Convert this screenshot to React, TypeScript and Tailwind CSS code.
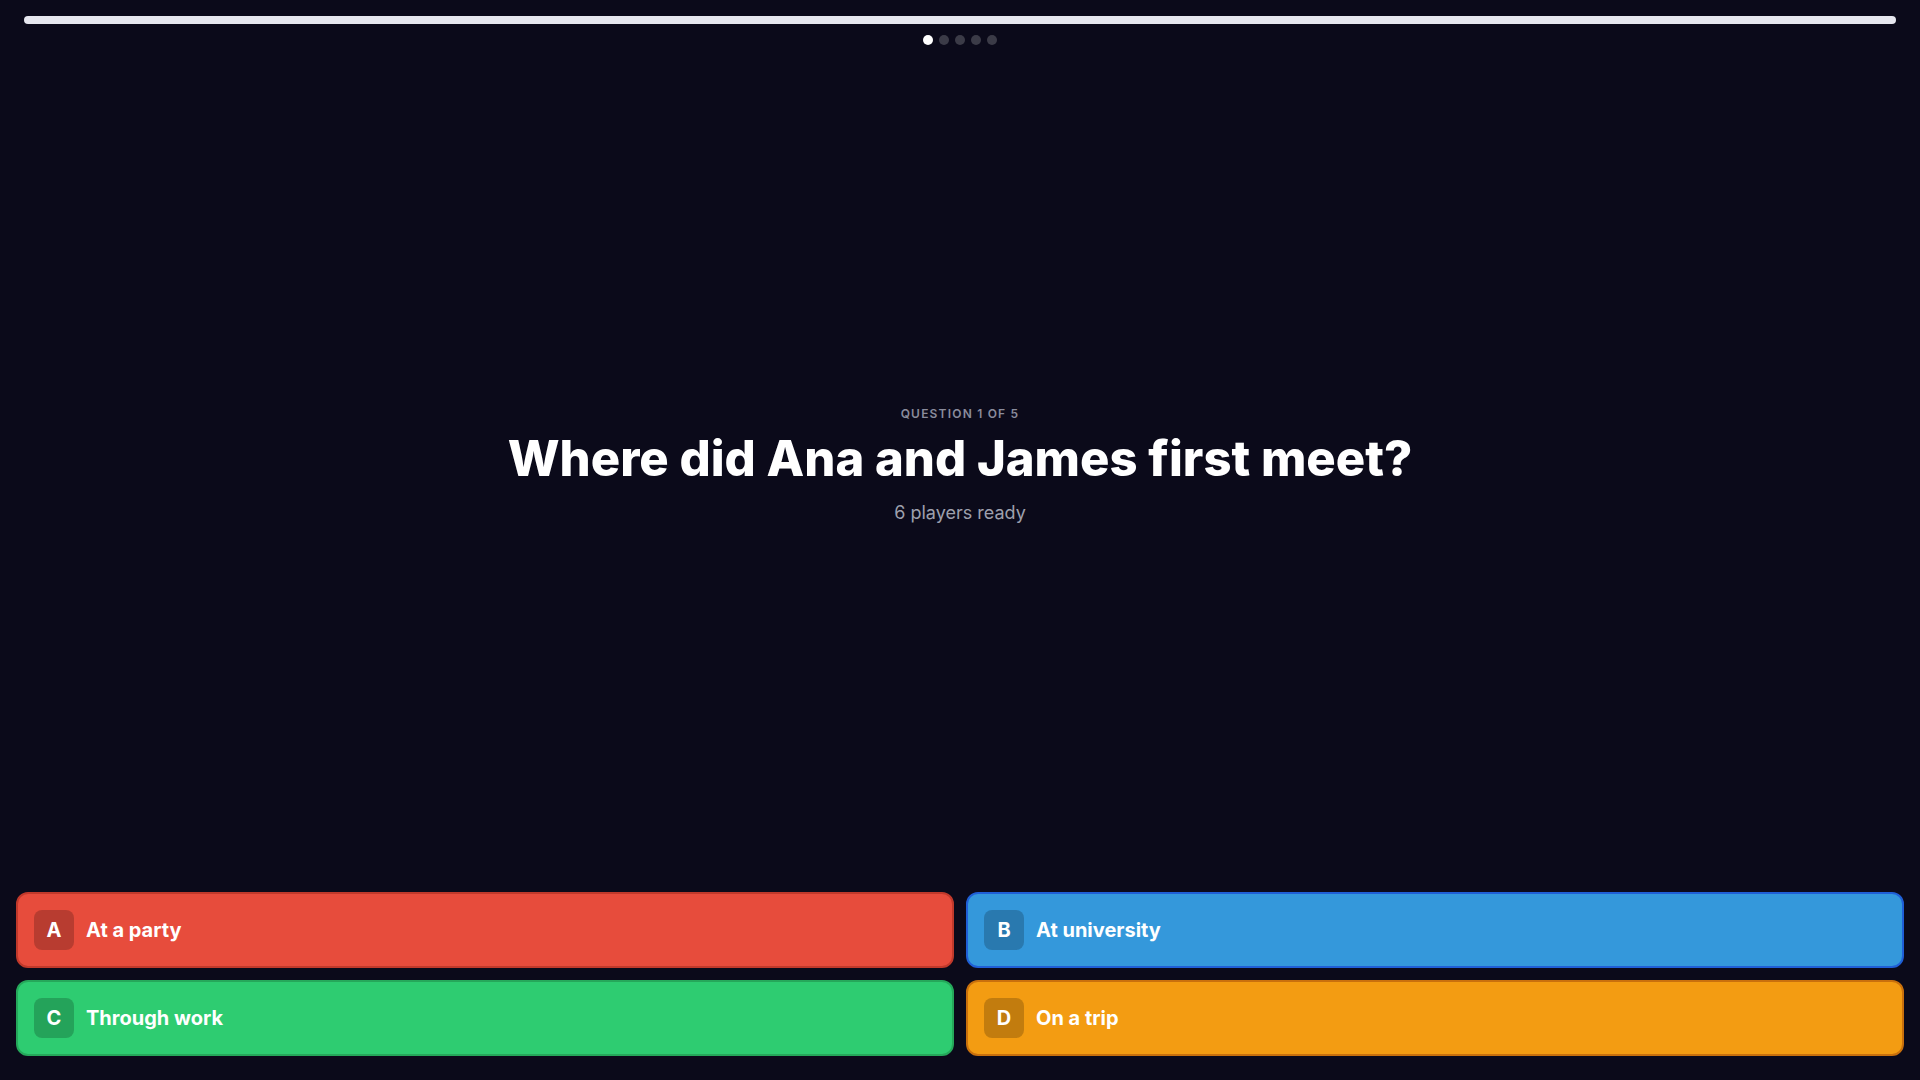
import React from 'react';

type Answer = {
  letter: string;
  label: string;
  box: string;
};

const answers: Answer[] = [
  { letter: 'A', label: 'At a party', box: 'bg-[#e74c3c] border-[#c0392b]' },
  { letter: 'B', label: 'At university', box: 'bg-[#3498db] border-[#1f5fd6]' },
  { letter: 'C', label: 'Through work', box: 'bg-[#2ecc71] border-[#25a85a]' },
  { letter: 'D', label: 'On a trip', box: 'bg-[#f39c12] border-[#c9700c]' },
];

const AnswerButton: React.FC<{ answer: Answer }> = ({ answer }) => (
  <button
    className={`flex items-center gap-3 rounded-xl border-2 p-4 text-left ${answer.box}`}
  >
    <span className="flex h-10 w-10 items-center justify-center rounded-lg bg-black/20 text-xl font-bold text-white">
      {answer.letter}
    </span>
    <span className="text-xl font-bold text-white">{answer.label}</span>
  </button>
);

export default function App() {
  return (
    <div
      className="flex h-screen w-full flex-col bg-[#0b0a1a] text-white"
      style={{ fontFamily: 'Inter, "Noto Sans", sans-serif' }}
    >
      <div className="px-6 pt-4">
        <div className="h-2 w-full rounded-full bg-[#e6e7ef]" />
        <div className="mt-[11px] flex justify-center gap-1.5">
          <span className="h-2.5 w-2.5 rounded-full bg-white" />
          <span className="h-2.5 w-2.5 rounded-full bg-white/20" />
          <span className="h-2.5 w-2.5 rounded-full bg-white/20" />
          <span className="h-2.5 w-2.5 rounded-full bg-white/20" />
          <span className="h-2.5 w-2.5 rounded-full bg-white/20" />
        </div>
      </div>

      <div className="flex flex-1 flex-col items-center justify-center pb-1">
        <p className="text-xs font-semibold uppercase tracking-widest text-[#8a8c9c]">
          Question 1 of 5
        </p>
        <h1 className="mt-3 text-[49px] font-extrabold leading-none">
          Where did Ana and James first meet?
        </h1>
        <p className="mt-4 text-lg text-[#9ea0ad]">6 players ready</p>
      </div>

      <div className="grid grid-cols-2 gap-3 px-4 pb-6">
        {answers.map((a) => (
          <AnswerButton key={a.letter} answer={a} />
        ))}
      </div>
    </div>
  );
}
